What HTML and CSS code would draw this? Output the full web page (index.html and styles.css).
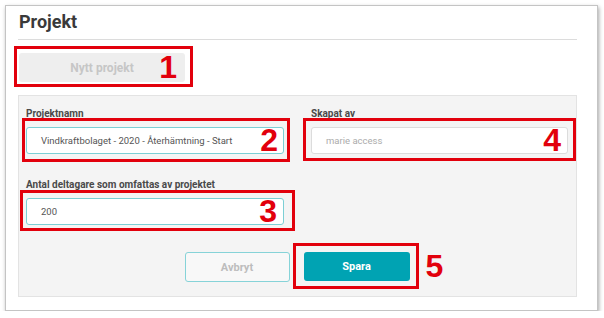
FILE: index.html
```html
<!DOCTYPE html>
<html lang="sv">
<head>
<meta charset="utf-8">
<title>Projekt</title>
<link rel="stylesheet" href="styles.css">
</head>
<body>
<div class="card">
  <h1 class="title">Projekt</h1>
  <div class="toolbar">
    <div class="anno-host">
      <button class="btn btn-new" type="button">Nytt projekt</button>
      <span class="anno anno-1"><b class="num">1</b></span>
    </div>
  </div>
  <div class="panel">
    <div class="grid">
      <div class="field">
        <label class="label">Projektnamn</label>
        <div class="anno-host">
          <div class="input input-active">Vindkraftbolaget - 2020 - Återhämtning - Start</div>
          <span class="anno anno-2"><b class="num">2</b></span>
        </div>
      </div>
      <div class="field">
        <label class="label">Skapat av</label>
        <div class="anno-host">
          <div class="input input-readonly">marie access</div>
          <span class="anno anno-4"><b class="num">4</b></span>
        </div>
      </div>
      <div class="field field-second">
        <label class="label">Antal deltagare som omfattas av projektet</label>
        <div class="anno-host">
          <div class="input input-active">200</div>
          <span class="anno anno-3"><b class="num">3</b></span>
        </div>
      </div>
    </div>
    <div class="actions">
      <button class="btn btn-cancel" type="button">Avbryt</button>
      <div class="anno-host">
        <button class="btn btn-save" type="button">Spara</button>
        <span class="anno anno-5"><b class="num num-out">5</b></span>
      </div>
    </div>
  </div>
</div>
</body>
</html>
```

FILE: styles.css
```css
* { box-sizing: border-box; }

html, body {
  margin: 0;
  padding: 0;
  background: #ffffff;
}

body {
  font-family: Roboto, "Liberation Sans", Arial, sans-serif;
  color: #444;
}

.card {
  margin: 5px 0 0 5px;
  width: 593px;
  height: 306px;
  background: #fff;
  border: 1px solid #c4c4c4;
  box-shadow: 1px 2px 4px rgba(0, 0, 0, 0.35);
  padding: 5px 20px 0 12px;
}

.title {
  margin: 0;
  padding: 0 0 6px 1px;
  font-size: 18px;
  line-height: 22px;
  font-weight: 700;
  color: #3a3a3a;
  border-bottom: 1px solid #dcdcdc;
}

.toolbar {
  display: flex;
  padding: 13px 0 13px 1px;
}

.anno-host {
  position: relative;
}

.btn {
  font-family: Roboto, "Liberation Sans", Arial, sans-serif;
  font-weight: 700;
  font-size: 11px;
  border-radius: 3px;
  cursor: pointer;
  padding: 0;
}

.btn-new {
  display: block;
  width: 166px;
  height: 29px;
  border: none;
  background: #eeeeee;
  color: #c6c6c6;
  font-size: 12px;
}

.panel {
  background: #f4f4f4;
  border: 1px solid #e3e3e3;
  height: 202px;
  padding: 12px 8px 14px 7px;
  display: flex;
  flex-direction: column;
}

.grid {
  display: grid;
  grid-template-columns: 258px 257px;
  column-gap: 27px;
  row-gap: 25px;
}

.field-second {
  grid-column: 1;
}

.label {
  display: block;
  font-size: 10px;
  line-height: 12px;
  font-weight: 700;
  color: #4a4a4a;
  margin-bottom: 7px;
  white-space: nowrap;
}

.input {
  height: 27px;
  border-radius: 3px;
  background: #fff;
  padding-left: 14px;
  font-size: 9.5px;
  line-height: 25px;
  color: #555;
  white-space: nowrap;
  overflow: hidden;
}

.input-active {
  border: 1px solid #7ccfd5;
}

.input-readonly {
  border: 1px solid #dcdcdc;
  color: #ababab;
}

.actions {
  margin-top: 27px;
  display: flex;
  justify-content: center;
  gap: 14px;
}

.btn-cancel {
  width: 105px;
  height: 30px;
  background: #f8f8f8;
  border: 1px solid #86d3d8;
  color: #bdbdbd;
}

.btn-save {
  display: block;
  width: 106px;
  height: 29px;
  background: #00a3b3;
  border: none;
  color: #ffffff;
}

.anno {
  position: absolute;
  border: 3px solid #e2000c;
  display: flex;
  align-items: center;
  justify-content: flex-end;
  pointer-events: none;
}

.num {
  font-family: "Liberation Sans", Arial, sans-serif;
  font-weight: 700;
  font-size: 32px;
  line-height: 1;
  color: #e2000c;
}

.anno-1 { top: -7px; left: -5px; right: -8px; bottom: -5px; padding-right: 13px; }
.anno-2 { top: -9px; left: -4px; right: -6px; bottom: -8px; padding-right: 9px; }
.anno-3 { top: -8px; left: -6px; right: -11px; bottom: -6px; padding-right: 15px; }
.anno-4 { top: -9px; left: -8px; right: -8px; bottom: -7px; padding-right: 12px; }
.anno-5 { top: -9px; left: -11px; right: -9px; bottom: -7px; }

.num-out {
  position: absolute;
  left: calc(100% + 10px);
  top: 50%;
  transform: translateY(-50%);
}
```
